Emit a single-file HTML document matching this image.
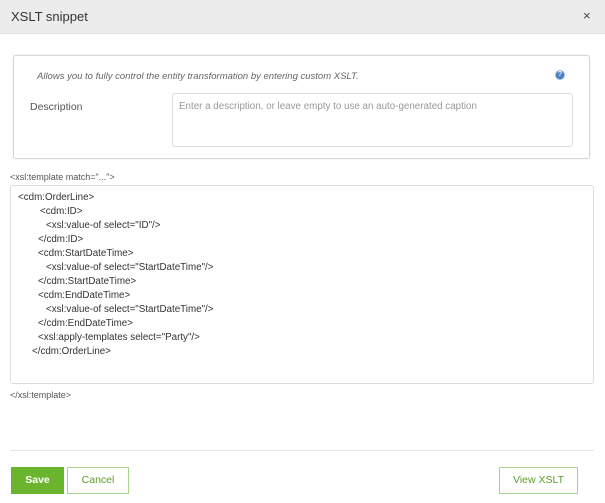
<!DOCTYPE html>
<html><head><meta charset="utf-8"><style>
*{box-sizing:border-box;margin:0;padding:0}
body{width:605px;height:503px;background:#fff;font-family:"Liberation Sans",sans-serif;color:#555;position:relative;overflow:hidden;font-size:10px}
.hdr{position:absolute;left:0;top:0;width:605px;height:34px;background:#ececec;border-bottom:1px solid #e2e2e2}
.hdr .t{position:absolute;left:11px;top:9px;font-size:13px;color:#333}
.hdr .x{position:absolute;left:583px;top:8px;font-size:13px;color:#444}
.panel{position:absolute;left:13px;top:55px;width:577px;height:104px;border:1px solid #d6d6d6;border-radius:3px;box-shadow:0 0 2px rgba(0,0,0,.1)}
.abs{position:absolute}
.ta{position:absolute;border:1px solid #ddd;border-radius:3px;background:#fff}
.btn{position:absolute;top:467px;height:27px;font-size:10.5px;text-align:center;line-height:25px}
.code div{position:absolute;white-space:pre;font-size:9.8px;color:#333}
</style></head><body>
<div class="hdr"><div class="t">XSLT snippet</div><div class="x">×</div></div>
<div class="panel"></div>
<div class="abs" style="left:37px;top:71px;font-style:italic;font-size:9.5px;color:#666">Allows you to fully control the entity transformation by entering custom XSLT.</div>
<div class="abs" style="left:555px;top:70px;width:10px;height:10px;border-radius:50%;background:#4a7fc4;border:1px solid #9bb8e0;color:#fff;font-size:7px;text-align:center;line-height:8px;font-weight:bold">?</div>
<div class="abs" style="left:30px;top:101px;font-size:10.5px;color:#555">Description</div>
<div class="ta" style="left:172px;top:93px;width:401px;height:54px"></div>
<div class="abs" style="left:179px;top:101px;font-size:9.8px;color:#999">Enter a description, or leave empty to use an auto-generated caption</div>
<div class="abs" style="left:10px;top:172px;font-size:9px;color:#555">&lt;xsl:template match="..."&gt;</div>
<div class="ta" style="left:10px;top:185px;width:584px;height:199px"></div>
<div class="code">
<div style="left:18px;top:192px">&lt;cdm:OrderLine&gt;</div>
<div style="left:40px;top:206px">&lt;cdm:ID&gt;</div>
<div style="left:46px;top:220px">&lt;xsl:value-of select="ID"/&gt;</div>
<div style="left:38px;top:234px">&lt;/cdm:ID&gt;</div>
<div style="left:38px;top:248px">&lt;cdm:StartDateTime&gt;</div>
<div style="left:46px;top:262px">&lt;xsl:value-of select="StartDateTime"/&gt;</div>
<div style="left:38px;top:276px">&lt;/cdm:StartDateTime&gt;</div>
<div style="left:38px;top:290px">&lt;cdm:EndDateTime&gt;</div>
<div style="left:46px;top:304px">&lt;xsl:value-of select="StartDateTime"/&gt;</div>
<div style="left:38px;top:318px">&lt;/cdm:EndDateTime&gt;</div>
<div style="left:38px;top:332px">&lt;xsl:apply-templates select="Party"/&gt;</div>
<div style="left:32px;top:346px">&lt;/cdm:OrderLine&gt;</div>
</div>
<div class="abs" style="left:10px;top:390px;font-size:9px;color:#555">&lt;/xsl:template&gt;</div>
<div class="abs" style="left:10px;top:450px;width:584px;height:1px;background:#e6e6e6"></div>
<div class="btn" style="left:11px;width:53px;background:#6ab42e;color:#fff;font-weight:bold;line-height:27px">Save</div>
<div class="btn" style="left:67px;width:62px;border:1px solid #a6d48a;color:#5a9e2a">Cancel</div>
<div class="btn" style="left:499px;width:79px;border:1px solid #a6d48a;color:#5a9e2a">View XSLT</div>
</body></html>
